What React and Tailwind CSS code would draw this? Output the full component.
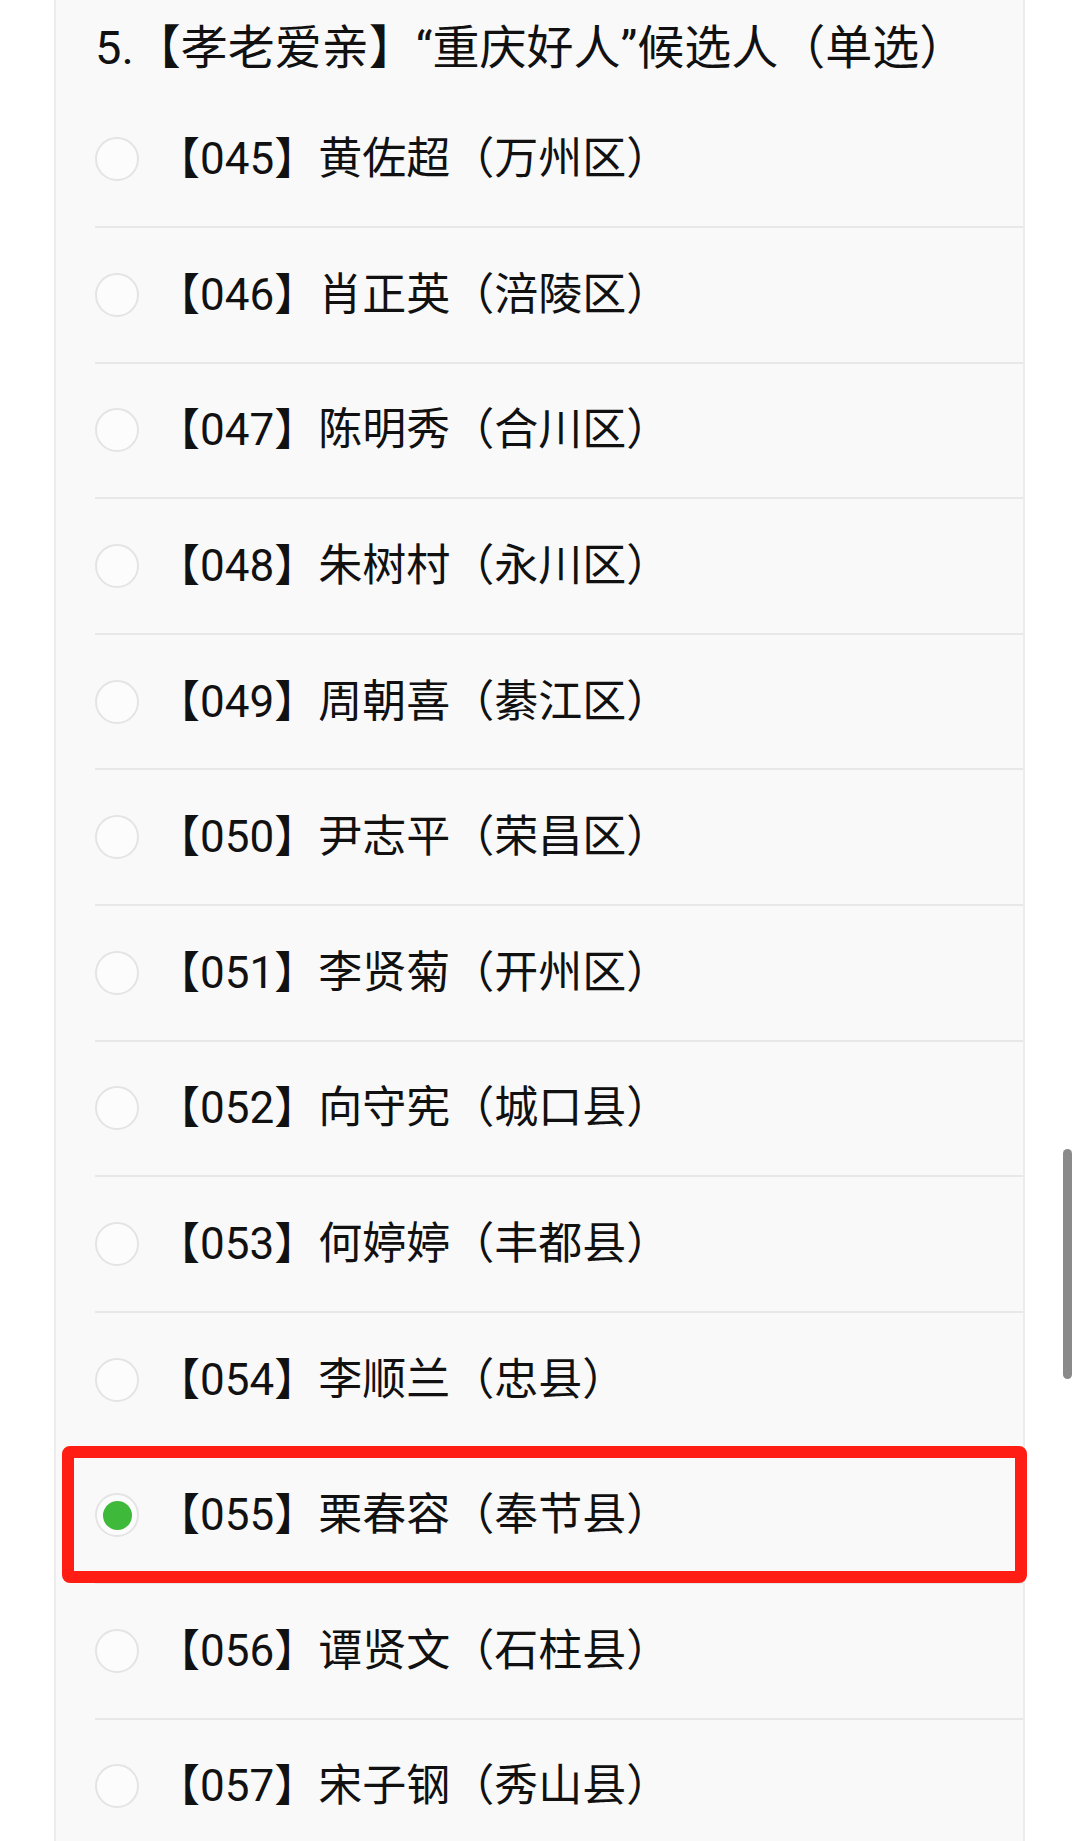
const candidates = [
  { no: '045', name: '黄佐超', area: '万州区' },
  { no: '046', name: '肖正英', area: '涪陵区' },
  { no: '047', name: '陈明秀', area: '合川区' },
  { no: '048', name: '朱树村', area: '永川区' },
  { no: '049', name: '周朝喜', area: '綦江区' },
  { no: '050', name: '尹志平', area: '荣昌区' },
  { no: '051', name: '李贤菊', area: '开州区' },
  { no: '052', name: '向守宪', area: '城口县' },
  { no: '053', name: '何婷婷', area: '丰都县' },
  { no: '054', name: '李顺兰', area: '忠县' },
  { no: '055', name: '栗春容', area: '奉节县' },
  { no: '056', name: '谭贤文', area: '石柱县' },
  { no: '057', name: '宋子钢', area: '秀山县' },
]

function Radio({ checked }) {
  return (
    <span className="flex h-[44px] w-[44px] shrink-0 items-center justify-center rounded-full border-2 border-[#e4e4e4] bg-[#fcfcfc]">
      {checked && <span className="h-[29px] w-[29px] rounded-full bg-[#3fb93a]" />}
    </span>
  )
}

function Option({ item, checked, highlight }) {
  return (
    <div className="relative flex h-[135.6px] items-center border-b-2 border-[#e8e8e8]">
      <Radio checked={checked} />
      <span className="ml-[17px] text-[44px] leading-none text-[#111]">
        【{item.no}】{item.name}（{item.area}）
      </span>
      {highlight && (
        <div className="absolute -left-[33px] -right-[4px] -top-[2px] -bottom-[1px] rounded-[8px] border-[12px] border-[#ff1d14]" />
      )}
    </div>
  )
}

export default function App() {
  const selected = '055'

  return (
    <div className="relative h-[1841px] overflow-hidden bg-white font-[Roboto,'Noto_Sans_CJK_SC',sans-serif]">
      <div className="ml-[54px] h-full w-[971px] border-x-2 border-[#ececec] bg-[#f9f9f9] pl-[39px] pt-[2px]">
        <div className="flex h-[90.4px] items-center text-[47px] leading-none text-[#111]">
          5.【孝老爱亲】“重庆好人”候选人（单选）
        </div>
        {candidates.map((c) => (
          <Option key={c.no} item={c} checked={c.no === selected} highlight={c.no === selected} />
        ))}
      </div>

      {/* scroll thumb */}
      <div className="absolute right-[8px] top-[1149px] h-[230px] w-[9px] rounded-full bg-[#8a8a8a]" />
    </div>
  )
}
